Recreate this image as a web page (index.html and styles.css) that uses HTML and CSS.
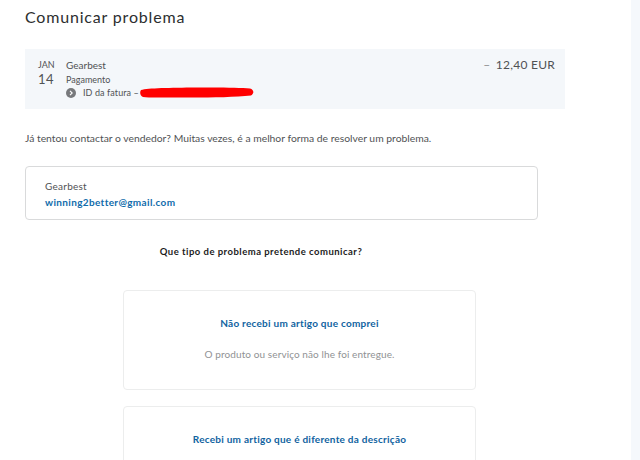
FILE: index.html
```html
<!DOCTYPE html>
<html lang="pt">
<head>
<meta charset="utf-8">
<title>Comunicar problema</title>
<link rel="stylesheet" href="styles.css">
</head>
<body>
<div class="page">
  <main class="main">
    <h1 class="title">Comunicar problema</h1>
    <section class="summary">
      <div class="date"><span class="month">JAN</span><span class="day">14</span></div>
      <div class="details">
        <div class="merchant">Gearbest</div>
        <div class="kind">Pagamento</div>
        <div class="invoice">
          <svg class="chev" width="10" height="10" viewBox="0 0 10 10"><circle cx="5" cy="5" r="5" fill="#77797c"/><path d="M4 2.800 6.200 5 4 7.200" fill="none" stroke="#fff" stroke-width="1.100"/></svg>
          <span>ID da fatura –</span>
          <svg class="scribble" width="114" height="11" viewBox="0 0 114 11"><path d="M1 3C8 1 30 .8 56 .5 80 .3 100 .5 110 1.500 114 2.500 114.500 6.500 111 8.500 92 10.500 60 10.800 36 10.500 20 10.500 8 10.800 3 10 0 9 -.5 5 1 3Z" fill="#f00"/></svg>
        </div>
      </div>
      <div class="amount"><span class="minus">–</span> 12,40 EUR</div>
    </section>
    <p class="prompt">Já tentou contactar o vendedor? Muitas vezes, é a melhor forma de resolver um problema.</p>
    <section class="seller">
      <div class="seller-name">Gearbest</div>
      <a class="seller-mail">winning2better@gmail.com</a>
    </section>
    <h2 class="question">Que tipo de problema pretende comunicar?</h2>
    <div class="options">
      <div class="option">
        <a class="option-title">Não recebi um artigo que comprei</a>
        <p class="option-desc">O produto ou serviço não lhe foi entregue.</p>
      </div>
      <div class="option">
        <a class="option-title">Recebi um artigo que é diferente da descrição</a>
      </div>
    </div>
  </main>
  <aside class="side"></aside>
</div>
</body>
</html>
```
FILE: styles.css
```css
html, body { margin: 0; height: 100%; overflow: hidden; background: #fff; }
body { font-family: Lato, "Open Sans", sans-serif; color: #505254; }
.page { display: flex; height: 460px; overflow: hidden; }
.main { width: 540px; margin-left: 25px; flex: none; }
.side { width: 9px; margin-left: auto; background: #f5f8fc; }
.title { margin: 0; padding-top: 7px; height: 49px; box-sizing: border-box; font-size: 16px; line-height: 20px; font-weight: 400; letter-spacing: .82px; color: #2c2e2f; }
.summary { display: flex; height: 60px; background: #f4f7fa; box-sizing: border-box; padding: 9px 10px 0 13px; }
.date { width: 28px; display: flex; flex-direction: column; align-items: flex-start; }
.month { font-size: 9px; line-height: 14px; width: 15px; text-align: center; }
.day { font-size: 13px; line-height: 14px; letter-spacing: .5px; width: 15px; text-align: center; }
.details { flex: 1; }
.merchant { font-size: 10px; line-height: 14px; letter-spacing: 0; }
.kind { font-size: 9px; line-height: 13px; margin-top: 1px; letter-spacing: 0; }
.invoice { display: flex; align-items: center; gap: 7px; font-size: 9px; line-height: 13px; letter-spacing: .1px; }
.scribble { margin-left: -6px; }
.amount { font-size: 12px; line-height: 14px; letter-spacing: .25px; }
.minus { color: #8a8c8e; margin-right: 2px; }
.prompt { margin: 0; padding-top: 22px; font-size: 10.350px; line-height: 14px; letter-spacing: 0; }
.seller { margin-top: 21px; width: 513px; height: 54px; box-sizing: border-box; border: 1px solid #d9dadb; border-radius: 4px; padding: 12px 19px; }
.seller-name { font-size: 10px; line-height: 15px; letter-spacing: .25px; }
.seller-mail { display: block; font-size: 10px; line-height: 17px; font-weight: 700; letter-spacing: .35px; color: #0f6cab; }
.question { margin: 25px 0 0; width: 472px; text-align: center; font-size: 9.500px; line-height: 14px; font-weight: 700; letter-spacing: .48px; color: #1c1c1c; }
.options { margin: 31px 0 0 98px; width: 353px; display: flex; flex-direction: column; gap: 16px; }
.option { height: 100px; box-sizing: border-box; border: 1px solid #eceded; border-radius: 4px; padding-top: 25px; text-align: center; }
.option-title { display: block; font-size: 10px; line-height: 14px; font-weight: 700; letter-spacing: .25px; color: #10639f; }
.option-desc { margin: 17px 0 0; font-size: 10px; line-height: 14px; letter-spacing: .1px; color: #909294; }
```
